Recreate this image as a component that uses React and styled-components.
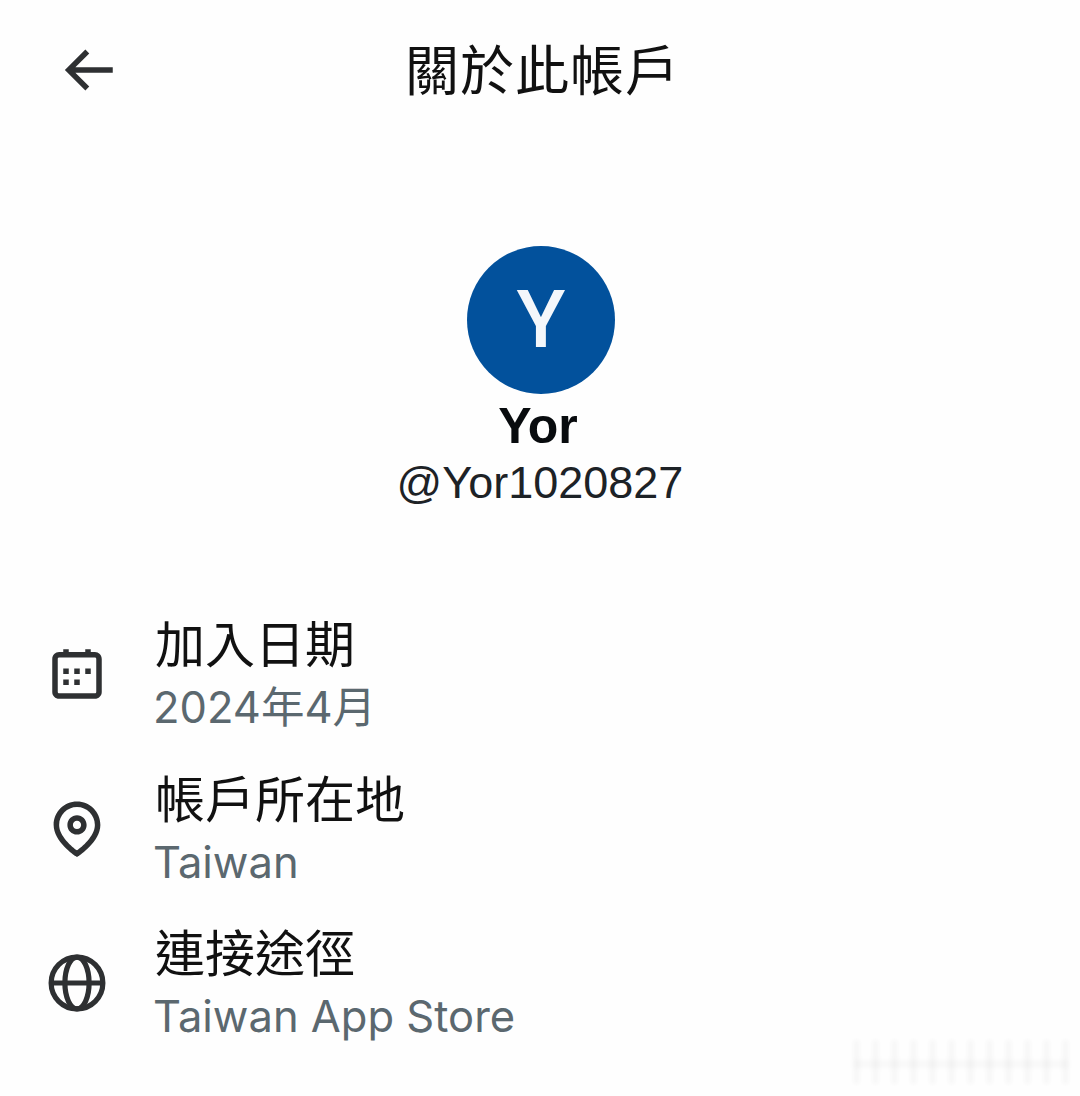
import React from "react";
import styled, { createGlobalStyle } from "styled-components";

const GlobalStyle = createGlobalStyle`
  html, body {
    margin: 0;
    padding: 0;
    background: #fff;
  }
  body {
    font-family: "Inter", "Noto Sans CJK TC", sans-serif;
  }
`;

const Page = styled.div`
  position: relative;
  width: 1080px;
  height: 1096px;
  overflow: hidden;
  background: #fefefe;
  color: #0f1419;
`;

const Header = styled.header`
  display: grid;
  grid-template-columns: 1fr auto 1fr;
  align-items: center;
  box-sizing: border-box;
  width: 1080px;
  height: 140px;
  padding: 0 56px 0 55px;
`;

const BackIcon = styled.svg`
  display: block;
  width: 66px;
  height: 66px;
  fill: #2e3032;
`;

const Title = styled.h1`
  margin: 0 0 4px 6px;
  font-family: "Noto Sans CJK TC", sans-serif;
  font-size: 54px;
  font-weight: 400;
  line-height: 1;
  letter-spacing: 1px;
  color: #111;
`;

const Profile = styled.section`
  display: flex;
  flex-direction: column;
  align-items: center;
  padding-top: 106px;
`;

const Avatar = styled.div`
  display: flex;
  align-items: center;
  justify-content: center;
  width: 148px;
  height: 148px;
  margin-left: 2px;
  border-radius: 50%;
  background: #02519c;
  color: #f4f7fb;
  font-family: "Roboto", sans-serif;
  font-size: 80px;
  font-weight: 500;
  line-height: 1;
`;

const Name = styled.div`
  margin: 4px 4px 0 0;
  font-family: "Liberation Sans", sans-serif;
  font-size: 50px;
  font-weight: 700;
  line-height: 56px;
  color: #080b0e;
`;

const Handle = styled.div`
  font-family: "Liberation Sans", sans-serif;
  font-size: 45px;
  line-height: 58px;
  color: #1d2226;
`;

const Details = styled.ul`
  display: flex;
  flex-direction: column;
  gap: 22.5px;
  list-style: none;
  margin: 0;
  padding: 97px 0 0 44px;
`;

const Row = styled.li`
  display: flex;
  align-items: center;
  gap: 45px;
`;

const RowIcon = styled.svg`
  flex: none;
  width: 66px;
  height: 66px;
  margin-bottom: 2px;
  fill: #2e3032;
`;

const RowText = styled.div`
  display: flex;
  flex-direction: column;
`;

const RowLabel = styled.div`
  font-family: "Noto Sans CJK TC", sans-serif;
  font-size: 50px;
  line-height: 65px;
  color: #111;
`;

const RowValue = styled.div`
  margin-left: -2px;
  font-family: "Inter", "Noto Sans CJK TC", sans-serif;
  font-size: 43.5px;
  line-height: 67px;
  color: #5b686f;
`;

// blurred remains of the image-host watermark in the corner
const Watermark = styled.div`
  position: absolute;
  right: 12px;
  bottom: 12px;
  width: 214px;
  height: 44px;
  background:
    linear-gradient(rgba(0, 0, 0, 0.03), rgba(0, 0, 0, 0.03)) 0 20px / 100% 8px no-repeat,
    repeating-linear-gradient(
      90deg,
      rgba(0, 0, 0, 0.05) 0 5px,
      rgba(0, 0, 0, 0) 5px 19px
    );
  filter: blur(2.5px);
  opacity: 0.75;
`;

const CalendarIcon = () => (
  <RowIcon viewBox="0 0 24 24">
    <path d="M7 4V3h2v1h6V3h2v1h1.5C19.89 4 21 5.12 21 6.5v12c0 1.38-1.11 2.5-2.5 2.5h-13C4.12 21 3 19.88 3 18.5v-12C3 5.12 4.12 4 5.5 4H7zM5.5 6c-.27 0-.5.22-.5.5v12c0 .28.23.5.5.5h13c.28 0 .5-.22.5-.5v-12c0-.28-.22-.5-.5-.5h-13zM7 12h2v-2H7v2zm0 4h2v-2H7v2zm4-4h2v-2h-2v2zm0 4h2v-2h-2v2zm4-4h2v-2h-2v2z" />
  </RowIcon>
);

const PinIcon = () => (
  <RowIcon viewBox="0 0 24 24">
    <path d="M12 7c-1.93 0-3.5 1.57-3.5 3.5S10.07 14 12 14s3.5-1.57 3.5-3.5S13.93 7 12 7zm0 5c-.827 0-1.5-.673-1.5-1.5S11.173 9 12 9s1.5.673 1.5 1.5S12.827 12 12 12zm0-10c-4.687 0-8.5 3.813-8.5 8.5 0 5.967 7.621 11.116 7.945 11.332l.555.37.555-.37c.324-.216 7.945-5.365 7.945-11.332C20.5 5.813 16.687 2 12 2zm0 17.77c-1.665-1.241-6.5-5.196-6.5-9.27C5.5 6.916 8.416 4 12 4s6.5 2.916 6.5 6.5c0 4.073-4.835 8.028-6.5 9.27z" />
  </RowIcon>
);

const GlobeIcon = () => (
  <RowIcon viewBox="0 0 24 24">
    <g fill="none" stroke="#2e3032" strokeWidth="1.9">
      <circle cx="12" cy="12" r="9.4" />
      <ellipse cx="12" cy="12" rx="4.4" ry="9.4" />
      <path d="M2.6 12h18.8" />
    </g>
  </RowIcon>
);

const rows = [
  { icon: <CalendarIcon />, label: "加入日期", value: "2024年4月" },
  { icon: <PinIcon />, label: "帳戶所在地", value: "Taiwan" },
  { icon: <GlobeIcon />, label: "連接途徑", value: "Taiwan App Store" },
];

export default function App() {
  return (
    <Page>
      <GlobalStyle />
      <Header>
        <BackIcon viewBox="0 0 24 24">
          <path d="M7.414 13l5.043 5.04-1.414 1.42L3.586 12l7.457-7.46 1.414 1.42L7.414 11H21v2H7.414z" />
        </BackIcon>
        <Title>關於此帳戶</Title>
      </Header>
      <Profile>
        <Avatar>Y</Avatar>
        <Name>Yor</Name>
        <Handle>@Yor1020827</Handle>
      </Profile>
      <Details>
        {rows.map((row) => (
          <Row key={row.label}>
            {row.icon}
            <RowText>
              <RowLabel>{row.label}</RowLabel>
              <RowValue>{row.value}</RowValue>
            </RowText>
          </Row>
        ))}
      </Details>
      <Watermark />
    </Page>
  );
}
